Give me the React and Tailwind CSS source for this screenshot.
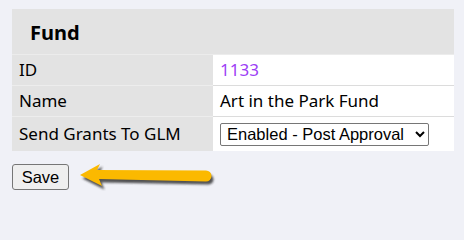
import React from "react";

const Arrow = () => (
  <svg width="140" height="30" viewBox="0 0 140 30" className="block">
    <defs>
      <filter id="sh" x="-10%" y="-30%" width="120%" height="160%">
        <feGaussianBlur stdDeviation="1.2" />
      </filter>
    </defs>
    {/* shadow */}
    <path
      d="M3,15 L23,3 L20,10 L129,11 A5,5 0 0 1 129,21 L22,19 L25,26 Z"
      fill="#2b2b2b"
      opacity="0.8"
      filter="url(#sh)"
      transform="translate(1.5,1.5)"
    />
    <path
      d="M2,13 L22,2 L19,8 L128,8.5 A5.5,5.5 0 0 1 128,19.5 L21,17 L24,24 Z"
      fill="#fbb900"
    />
  </svg>
);

export default function App() {
  return (
    <div className="min-h-screen bg-[#f0f1f7] pt-[9px] pl-[12px] font-['Noto_Sans',sans-serif]">
      <table className="border-collapse w-[442px] text-[17px] text-black">
        <thead>
          <tr>
            <th
              colSpan={2}
              className="h-[45px] bg-[#e3e3e3] border-b border-[#ececec] text-left pl-[18px] pt-[3px] text-[20px] font-bold"
            >
              Fund
            </th>
          </tr>
        </thead>
        <tbody>
          <tr>
            <td className="w-[201px] h-[31px] bg-[#e3e3e3] border-b border-[#ededed] pl-[7px]">ID</td>
            <td className="h-[31px] bg-white border-b border-[#dcdcdc] pl-[7px] text-[#9d3ff5]">1133</td>
          </tr>
          <tr>
            <td className="h-[31px] bg-[#e3e3e3] border-b border-[#ededed] pl-[7px]">Name</td>
            <td className="h-[31px] bg-white border-b border-[#dcdcdc] pl-[7px]">Art in the Park Fund</td>
          </tr>
          <tr>
            <td className="h-[35px] bg-[#e3e3e3] pl-[7px]">Send Grants To GLM</td>
            <td className="h-[35px] bg-white pl-[7px]">
              <select
                defaultValue="post"
                className="w-[209px] h-[23px] border border-[#767676] rounded-[2px] bg-white text-[16.5px] font-['Liberation_Sans',Arial,sans-serif] px-[2px]"
              >
                <option value="post">Enabled - Post Approval</option>
                <option value="pre">Enabled - Pre Approval</option>
                <option value="off">Disabled</option>
              </select>
            </td>
          </tr>
        </tbody>
      </table>
      <div className="flex items-center gap-[9px] mt-[11px]">
        <button className="h-[26px] w-[57px] border border-[#767676] rounded-[3px] bg-[#efefef] text-[16.5px] font-['Liberation_Sans',Arial,sans-serif]">
          Save
        </button>
        <Arrow />
      </div>
    </div>
  );
}
